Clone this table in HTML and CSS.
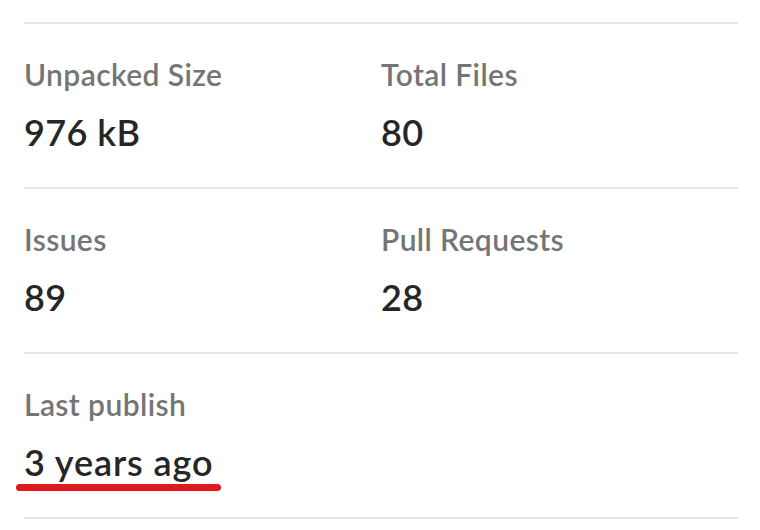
FILE: index.html
```html
<!DOCTYPE html>
<html>
<head>
<meta charset="utf-8">
<link rel="stylesheet" href="styles.css">
</head>
<body>
<div class="sidebar">
  <div class="row">
    <div class="stat">
      <h3 class="label">Unpacked Size</h3>
      <p class="value">976 kB</p>
    </div>
    <div class="stat">
      <h3 class="label">Total Files</h3>
      <p class="value">80</p>
    </div>
  </div>
  <div class="row">
    <div class="stat">
      <h3 class="label">Issues</h3>
      <p class="value">89</p>
    </div>
    <div class="stat">
      <h3 class="label">Pull Requests</h3>
      <p class="value">28</p>
    </div>
  </div>
  <div class="row">
    <div class="stat">
      <h3 class="label">Last publish</h3>
      <p class="value"><span class="marked">3 years ago</span></p>
    </div>
  </div>
</div>
</body>
</html>
```
FILE: styles.css
```css
html, body {
  margin: 0;
  padding: 0;
  background: #ffffff;
}
body {
  font-family: "Lato", "Noto Sans", sans-serif;
}
.sidebar {
  margin: 22px 0 0 24px;
  width: 714px;
  border-top: 2px solid #e5e5e5;
}
.row {
  display: grid;
  grid-template-columns: 357px 357px;
  height: 163px;
  border-bottom: 2px solid #e5e5e5;
  box-sizing: content-box;
}
.stat {
  padding-top: 31px;
}
.label {
  margin: 0;
  font-size: 30px;
  line-height: 38px;
  letter-spacing: 0.4px;
  font-weight: 600;
  color: #757575;
}
.value {
  margin: 17px 0 0;
  font-size: 36px;
  line-height: 44px;
  letter-spacing: 0.4px;
  font-weight: 600;
  color: #262626;
}
.marked {
  position: relative;
  letter-spacing: 0.9px;
}
.marked::after {
  content: "";
  position: absolute;
  left: -8px;
  right: -8px;
  bottom: -7px;
  height: 7px;
  border-radius: 4px;
  background: #e0191e;
}
```
